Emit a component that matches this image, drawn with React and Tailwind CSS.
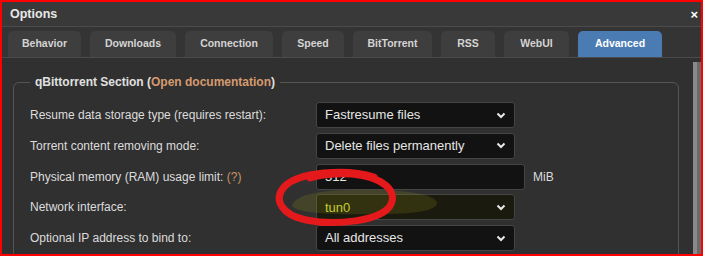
import React from "react";

const tabs = [
  { name: "Behavior", w: "w-[73px]" },
  { name: "Downloads", w: "w-[86px]" },
  { name: "Connection", w: "w-[88px]" },
  { name: "Speed", w: "w-[62px]" },
  { name: "BitTorrent", w: "w-[79px]" },
  { name: "RSS", w: "w-[54px]" },
  { name: "WebUI", w: "w-[65px]" },
  { name: "Advanced", w: "w-[84px]", active: true },
];

const Chevron = () => (
  <svg width="10" height="7" viewBox="0 0 10 7" className="shrink-0">
    <path d="M1.5 1.5 L5 5 L8.5 1.5" fill="none" stroke="#e8e8e8" strokeWidth="2" />
  </svg>
);

const Select = ({ value, color = "text-[#e6e6e6]", tint = "bg-[#121212]" }) => (
  <div
    className={`w-[199px] h-[26px] ${tint} border border-[#454545] rounded-[3px] flex items-center justify-between pl-2 pr-[8px] text-[13px] ${color}`}
  >
    <span>{value}</span>
    <Chevron />
  </div>
);

const Row = ({ label, children }) => (
  <div className="flex items-center h-[26px]">
    <div className="w-[286px] text-[12px] text-[#dcdcdc]">{label}</div>
    {children}
  </div>
);

const App = () => {
  return (
    <div
      className="relative w-[703px] h-[256px] overflow-hidden border-2 border-[#ff0000] bg-[#303030] flex flex-col"
      style={{ fontFamily: '"Liberation Sans", Arial, sans-serif' }}
    >
      {/* title bar */}
      <div className="h-[25px] shrink-0 bg-[#393939] border-b border-[#4b4b4b] flex items-center justify-between pl-[8px] pr-[3px]">
        <span className="text-[12.5px] font-bold text-[#e8e8e8]">Options</span>
        <span className="text-[13px] font-bold text-white leading-none">×</span>
      </div>

      {/* tabs */}
      <div className="h-[31px] shrink-0 bg-[#343434] border-b border-[#4b4b4b] flex items-end gap-[9px] pl-[6px]">
        {tabs.map((t) => (
          <div
            key={t.name}
            className={`${t.w} h-[26px] rounded-t-[5px] flex items-center justify-center text-[10.5px] font-bold ${
              t.active ? "bg-[#4a7cb3] text-white" : "bg-[#3e3e3e] text-[#d4d4d4]"
            }`}
          >
            {t.name}
          </div>
        ))}
      </div>

      {/* content */}
      <div className="flex-1 flex min-h-0">
        <div className="flex-1 pl-[11px] pr-[14px] pt-[16px]">
          <fieldset className="border border-[#555] rounded-[6px] pl-4 pr-4 pb-4">
            <legend className="px-[5px] text-[12px] font-bold text-[#e0e0e0] leading-[16px]">
              qBittorrent Section (<span className="text-[#d69a6e]">Open documentation</span>)
            </legend>
            <div className="flex flex-col gap-[4.75px] pt-[12px]">
              <Row label="Resume data storage type (requires restart):">
                <Select value="Fastresume files" />
              </Row>
              <Row label="Torrent content removing mode:">
                <Select value="Delete files permanently" />
              </Row>
              <Row
                label={
                  <>
                    Physical memory (RAM) usage limit: <span className="text-[#c9936a]">(?)</span>
                  </>
                }
              >
                <div className="w-[209px] h-[26px] bg-[#121212] border border-[#454545] rounded-[3px] flex items-center pl-2 text-[13px] text-[#e6e6e6]">
                  512
                </div>
                <span className="ml-[8px] text-[12px] text-[#dcdcdc]">MiB</span>
              </Row>
              <Row label="Network interface:">
                <Select value="tun0" color="text-[#cfdc3a]" tint="bg-[#1a1a0f]" />
              </Row>
              <Row label="Optional IP address to bind to:">
                <Select value="All addresses" />
              </Row>
            </div>
          </fieldset>
        </div>
        <div className="w-[8px] shrink-0 mt-[4px] flex">
          <div className="w-[4px] bg-[#8a8a8a]" />
          <div className="w-[4px] bg-[#6a6a6a]" />
        </div>
      </div>

      {/* annotation: highlight smear and red circle */}
      <svg className="absolute left-[-2px] top-[-2px] pointer-events-none" width="703" height="256">
        <path
          d="M292 206 C296 192 330 189 380 190 C410 191 432 194 437 202 C438 210 420 214 380 214 C340 215 298 214 292 206 Z"
          fill="rgba(150,150,20,0.2)"
        />
        <path
          d="M374 177 C346 168 298 172 284 187 C273 200 282 215 306 220 C336 226 380 221 390 206 C399 191 383 177 352 174 C336 173 320 175 310 178"
          fill="none"
          stroke="#e3191c"
          strokeWidth="7"
          strokeLinecap="round"
        />
      </svg>
    </div>
  );
};

export default App;
